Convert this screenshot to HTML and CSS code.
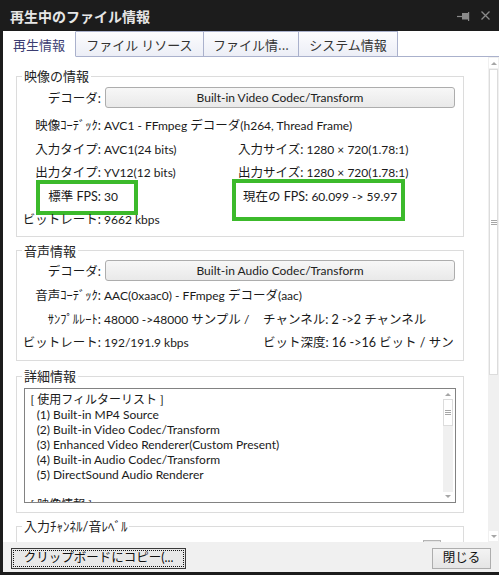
FILE: index.html
```html
<!DOCTYPE html>
<html lang="ja">
<head>
<meta charset="utf-8">
<title>再生中のファイル情報</title>
<link rel="stylesheet" href="styles.css">
</head>
<body>
<div class="window">
  <div class="titlebar">
    <span class="title">再生中のファイル情報</span>
    <div class="title-icons">
      <svg class="ico-pin" width="14" height="9" viewBox="0 0 14 9"><path d="M0 4.5H5" stroke="#8a8a8a" stroke-width="1.2"/><rect x="5" y="1" width="6" height="6.5" fill="#8a8a8a"/><path d="M11.6 0V9" stroke="#8a8a8a" stroke-width="1.2"/></svg>
      <svg class="ico-close" width="9" height="9" viewBox="0 0 9 9"><path d="M0.5 0.5L8.5 8.5M8.5 0.5L0.5 8.5" stroke="#8a8a8a" stroke-width="1.3"/></svg>
    </div>
  </div>
  <div class="frame">
    <div class="tabs">
      <div class="tab active t1">再生情報</div>
      <div class="tab t2">ファイル リソース</div>
      <div class="tab t3">ファイル情...</div>
      <div class="tab t4">システム情報</div>
      <div class="tab-fill"></div>
    </div>
    <div class="content">
      <div class="pane">
        <fieldset class="group g-video">
          <legend>映像の情報</legend>
          <div class="dec-row"><span class="lab">デコーダ:</span><div class="dec-btn">Built-in Video Codec/Transform</div></div>
          <div class="rows rows-video">
            <div class="row"><span class="lab">映像ｺｰﾃﾞｯｸ:</span><span class="val wide">AVC1 - FFmpeg <span class="cj">デコーダ</span>(h264, Thread Frame)</span></div>
            <div class="row"><span class="lab">入力タイプ:</span><span class="val">AVC1(24 bits)</span><span class="rt">入力サイズ: <span class="num">1280 × 720(1.78:1)</span></span></div>
            <div class="row"><span class="lab">出力タイプ:</span><span class="val">YV12(12 bits)</span><span class="rt">出力サイズ: <span class="num">1280 × 720(1.78:1)</span></span></div>
            <div class="row fps"><span class="lab">標準 FPS:</span><span class="val">30</span><span class="rt fps-now">現在の FPS: <span class="num">60.099 -&gt; 59.97</span></span></div>
            <div class="row"><span class="lab">ビットレート:</span><span class="val">9662 kbps</span></div>
          </div>
        </fieldset>

        <fieldset class="group g-audio">
          <legend>音声情報</legend>
          <div class="dec-row"><span class="lab">デコーダ:</span><div class="dec-btn">Built-in Audio Codec/Transform</div></div>
          <div class="rows rows-audio">
            <div class="row"><span class="lab">音声ｺｰﾃﾞｯｸ:</span><span class="val wide">AAC(0xaac0) - FFmpeg <span class="cj">デコーダ</span>(aac)</span></div>
            <div class="row"><span class="lab">ｻﾝﾌﾟﾙﾚｰﾄ:</span><span class="val">48000 -&gt;48000 <span class="cj">サンプル</span> /</span><span class="rt rt-a">チャンネル: 2 -&gt;2 チャンネル</span></div>
            <div class="row"><span class="lab">ビットレート:</span><span class="val">192/191.9 kbps</span><span class="rt rt-a">ビット深度: 16 -&gt;16 ビット / サン</span></div>
          </div>
        </fieldset>

        <fieldset class="group g-detail">
          <legend>詳細情報</legend>
          <div class="listbox">
<pre class="list-text">[ 使用フィルターリスト ]
  (1) Built-in MP4 Source
  (2) Built-in Video Codec/Transform
  (3) Enhanced Video Renderer(Custom Present)
  (4) Built-in Audio Codec/Transform
  (5) DirectSound Audio Renderer

[ 映像情報 ]</pre>
            <div class="mini-scroll">
              <div class="sb-btn"><span class="arr-up"></span></div>
              <div class="sb-thumb mini-thumb"><span class="grip"></span></div>
              <div class="sb-track"></div>
              <div class="sb-btn"><span class="arr-down"></span></div>
            </div>
          </div>
        </fieldset>

        <fieldset class="group g-input">
          <legend>入力ﾁｬﾝﾈﾙ/音ﾚﾍﾞﾙ</legend>
          <div class="small-btn"></div>
        </fieldset>
      </div>
      <div class="vscroll">
        <div class="sb-btn main-btn"><span class="arr-up"></span></div>
        <div class="sb-thumb main-thumb"><span class="grip"></span></div>
        <div class="sb-track"></div>
        <div class="sb-btn main-btn"><span class="arr-down"></span></div>
      </div>
    </div>
    <div class="footer">
      <button class="btn btn-copy"><span class="focus">クリップボードにコピー(...</span></button>
      <button class="btn btn-close">閉じる</button>
    </div>
  </div>
</div>
</body>
</html>
```
FILE: styles.css
```css
* { box-sizing: border-box; }
html, body { margin: 0; padding: 0; }
body {
  width: 499px;
  height: 575px;
  overflow: hidden;
  background: #1c1c1c;
  font-family: Lato, "Noto Sans CJK JP", sans-serif;
  font-size: 12.5px;
  color: #1a1a1a;
}
.window {
  width: 499px;
  height: 575px;
  display: flex;
  flex-direction: column;
  background: #1c1c1c;
}

/* title bar */
.titlebar {
  height: 31px;
  flex: none;
  display: flex;
  align-items: center;
  justify-content: space-between;
  padding: 0 9px 0 10px;
}
.title {
  font-family: "Noto Sans CJK JP", sans-serif;
  font-size: 14px;
  font-weight: 700;
  line-height: 1;
  color: #e6e6e6;
}
.title-icons { display: flex; align-items: center; gap: 10px; }
.title-icons svg { display: block; }
.ico-pin { margin-top: 2px; }

/* frame */
.frame {
  flex: 1;
  min-height: 0;
  margin: 0 0 3px 3px;
  background: #fff;
  display: flex;
  flex-direction: column;
}

/* tabs */
.tabs { height: 26px; flex: none; display: flex; }
.tab {
  height: 26px;
  flex: none;
  display: flex;
  align-items: center;
  justify-content: center;
  font-family: "Noto Sans CJK JP", sans-serif;
  font-size: 13px;
  line-height: 1;
  color: #333;
  border-top: 1px solid #aab1cc;
  border-right: 1px solid #aab1cc;
  border-bottom: 1px solid #aab1cc;
  background: linear-gradient(#fcfcfe, #eceef6);
  padding-top: 1px;
}
.tab.active {
  background: #fff;
  border-top-color: #fff;
  border-bottom-color: #fff;
  color: #3c3d72;
}
.t1 { width: 73px; }
.t2 { width: 128px; }
.t3 { width: 95px; }
.t4 { width: 99px; }
.tab-fill { flex: 1; border-bottom: 1px solid #aab1cc; }

/* content */
.content { flex: 1; min-height: 0; display: flex; }
.pane {
  flex: 1;
  min-width: 0;
  overflow: hidden;
  padding: 12px 0 0 13px;
}

.group {
  width: 448px;
  min-width: 0;
  margin: 0;
  padding: 0;
  border: 1px solid #dcdcdc;
}
.group legend {
  font-size: 13px;
  line-height: 14px;
  padding: 0 2px;
  margin-left: 5px;
  color: #222;
}
.g-video { padding-bottom: 4px; }
.g-audio { margin-top: 7px; padding-bottom: 5px; }
.g-detail { margin-top: 8.5px; padding-bottom: 9px; }
.g-input { margin-top: 6px; padding-bottom: 10px; }

.dec-row {
  display: flex;
  align-items: center;
  height: 21px;
}
.g-video .dec-row { margin-top: 4px; }
.g-audio .dec-row { margin-top: 2.5px; }
.dec-row .lab { width: 84px; text-align: right; }
.dec-btn {
  margin-left: 4px;
  width: 350px;
  height: 21px;
  border: 1px solid #adadad;
  border-radius: 3px;
  background: linear-gradient(#f7f7f7, #e9e9e9);
  display: flex;
  align-items: center;
  justify-content: center;
  color: #222;
  font-size: 12px;
  line-height: 1;
}

.rows-video { margin-top: 6px; }
.rows-audio { margin-top: 3px; }
.row {
  display: grid;
  grid-template-columns: 84px 137px 1fr;
  height: 23.5px;
  line-height: 23.5px;
  white-space: nowrap;
  position: relative;
}
.row .lab { text-align: right; }
.row .val { padding-left: 3px; font-size: 12px; }
.row .wide { grid-column: 2 / 4; }
.cj { font-size: 12.5px; }
.rt { padding-left: 0; }
.fps-now { padding-left: 5px; }
.rt-a { padding-left: 25px; }
.num { font-size: 12px; }

/* green highlight boxes (overlay annotations) */
.fps::before,
.fps::after {
  content: "";
  position: absolute;
  border: 4px solid #3cba2b;
  pointer-events: none;
}
.fps::before { left: 19px; top: -4.5px; width: 94px; height: 27px; }
.fps::after { left: 215px; top: -5.5px; width: 165px; height: 34px; }

/* detail list */
.listbox {
  margin: 5px 0 0 7px;
  width: 432px;
  height: 115px;
  border: 1px solid #828282;
  background: #fff;
  display: flex;
}
.list-text {
  flex: 1;
  min-width: 0;
  margin: 0;
  padding: 2.5px 0 0 5.5px;
  font-family: inherit;
  font-size: 12px;
  line-height: 15px;
  white-space: pre;
  overflow: hidden;
  color: #1a1a1a;
}
.mini-scroll {
  width: 10px;
  flex: none;
  margin: 1px 2px 1px 0;
  background: #f0f0f0;
  display: flex;
  flex-direction: column;
}

/* scrollbars */
.sb-btn {
  height: 9px;
  flex: none;
  display: flex;
  align-items: center;
  justify-content: center;
  background: #fff;
}
.sb-track { flex: 1; }
.sb-thumb {
  flex: none;
  background: #fff;
  border: 1px solid #dcdcdc;
  display: flex;
  align-items: center;
  justify-content: center;
}
.mini-thumb { height: 27px; }
.arr-up {
  width: 0; height: 0;
  border-left: 3px solid transparent;
  border-right: 3px solid transparent;
  border-bottom: 3px solid #a6a6a6;
}
.arr-down {
  width: 0; height: 0;
  border-left: 3px solid transparent;
  border-right: 3px solid transparent;
  border-top: 3px solid #a6a6a6;
}
.grip {
  width: 6px;
  height: 5px;
  background: repeating-linear-gradient(#a6a6a6 0 1px, transparent 1px 2px);
}

.vscroll {
  width: 11px;
  flex: none;
  background: #f0f0f0;
  display: flex;
  flex-direction: column;
  padding: 1px;
}
.main-btn { height: 10px; }
.main-thumb { height: 306px; margin-top: 1px; }

.small-btn {
  margin: 7px 0 0 406px;
  width: 18px;
  height: 20px;
  border: 1px solid #b4b4b4;
  background: #e4e4e4;
}

/* footer */
.footer {
  height: 30px;
  flex: none;
  background: #f0f0f0;
  display: flex;
  justify-content: space-between;
  align-items: flex-start;
  padding: 6px 8px 0 8px;
}
.btn {
  height: 21px;
  margin: 0;
  padding: 0;
  font-family: inherit;
  font-size: 12.5px;
  line-height: 1;
  color: #111;
  display: flex;
  align-items: center;
  justify-content: center;
}
.btn-copy {
  width: 175px;
  border: 1px solid #3a3a3a;
  background: #e8e8e8;
  padding: 1px;
}
.btn-copy .focus {
  width: 100%;
  height: 100%;
  border: 1px dotted #111;
  display: flex;
  align-items: center;
  justify-content: center;
}
.btn-close {
  width: 59px;
  border: 1px solid #adadad;
  background: linear-gradient(#f3f3f3, #e5e5e5);
}
```
